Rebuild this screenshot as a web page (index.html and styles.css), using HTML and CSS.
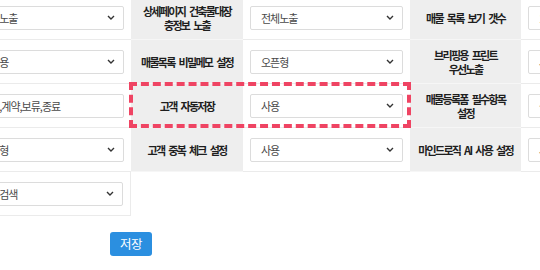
FILE: index.html
```html
<!DOCTYPE html>
<html lang="ko">
<head>
<meta charset="utf-8">
<link rel="stylesheet" href="styles.css">
</head>
<body>
<div class="page">
  <div class="grid">
    <div class="cell val"><div class="sel"><span>전체노출</span><svg class="chev" width="8" height="5" viewBox="0 0 8 5"><path d="M1 1l3 3 3-3" fill="none" stroke="#333" stroke-width="1.4"/></svg></div></div>
    <div class="cell lab">상세페이지 건축물대장<br>충정보 노출</div>
    <div class="cell val"><div class="sel"><span>전체노출</span><svg class="chev" width="8" height="5" viewBox="0 0 8 5"><path d="M1 1l3 3 3-3" fill="none" stroke="#333" stroke-width="1.4"/></svg></div></div>
    <div class="cell lab">매물 목록 보기 갯수</div>
    <div class="cell val"><div class="sel"><span>10개</span><svg class="chev" width="8" height="5" viewBox="0 0 8 5"><path d="M1 1l3 3 3-3" fill="none" stroke="#333" stroke-width="1.4"/></svg></div></div>

    <div class="cell val"><div class="sel"><span>미사용</span><svg class="chev" width="8" height="5" viewBox="0 0 8 5"><path d="M1 1l3 3 3-3" fill="none" stroke="#333" stroke-width="1.4"/></svg></div></div>
    <div class="cell lab">매물목록 비밀메모 설정</div>
    <div class="cell val"><div class="sel"><span>오픈형</span><svg class="chev" width="8" height="5" viewBox="0 0 8 5"><path d="M1 1l3 3 3-3" fill="none" stroke="#333" stroke-width="1.4"/></svg></div></div>
    <div class="cell lab">브리핑용 프린트<br>우선노출</div>
    <div class="cell val"><div class="sel"><span>사용</span><svg class="chev" width="8" height="5" viewBox="0 0 8 5"><path d="M1 1l3 3 3-3" fill="none" stroke="#333" stroke-width="1.4"/></svg></div></div>

    <div class="cell val"><div class="sel inp"><span>진행,계약,보류,종료</span></div></div>
    <div class="cell lab">고객 자동저장</div>
    <div class="cell val"><div class="sel"><span>사용</span><svg class="chev" width="8" height="5" viewBox="0 0 8 5"><path d="M1 1l3 3 3-3" fill="none" stroke="#333" stroke-width="1.4"/></svg></div></div>
    <div class="cell lab">매물등록폼 필수항목<br>설정</div>
    <div class="cell val"><div class="sel"><span>설정</span><svg class="chev" width="8" height="5" viewBox="0 0 8 5"><path d="M1 1l3 3 3-3" fill="none" stroke="#333" stroke-width="1.4"/></svg></div></div>

    <div class="cell val"><div class="sel"><span>오픈형</span><svg class="chev" width="8" height="5" viewBox="0 0 8 5"><path d="M1 1l3 3 3-3" fill="none" stroke="#333" stroke-width="1.4"/></svg></div></div>
    <div class="cell lab">고객 중복 체크 설정</div>
    <div class="cell val"><div class="sel"><span>사용</span><svg class="chev" width="8" height="5" viewBox="0 0 8 5"><path d="M1 1l3 3 3-3" fill="none" stroke="#333" stroke-width="1.4"/></svg></div></div>
    <div class="cell lab">마인드로직 AI 사용 설정</div>
    <div class="cell val"><div class="sel"><span>사용</span><svg class="chev" width="8" height="5" viewBox="0 0 8 5"><path d="M1 1l3 3 3-3" fill="none" stroke="#333" stroke-width="1.4"/></svg></div></div>

    <div class="cell val last"><div class="sel"><span>주소검색</span><svg class="chev" width="8" height="5" viewBox="0 0 8 5"><path d="M1 1l3 3 3-3" fill="none" stroke="#333" stroke-width="1.4"/></svg></div></div>

    <div class="highlight"></div>
  </div>
  <div class="actions"><button class="save">저장</button></div>
  <div class="footline"></div>
</div>
</body>
</html>
```

FILE: styles.css
```css
html, body {
  margin: 0;
  padding: 0;
  background: #fff;
  overflow: hidden;
}
body {
  width: 540px;
  height: 270px;
  font-family: "Noto Sans CJK KR", "Noto Sans", sans-serif;
  color: #222;
}
.page {
  margin-top: -4px;
}
.grid {
  position: relative;
  display: grid;
  grid-template-columns: 168px 112px 167px 111px 200px;
  margin-left: -37px;
  width: 758px;
}
.cell {
  box-sizing: border-box;
  height: 44px;
  border-bottom: 1px solid #ebebeb;
  display: flex;
  align-items: center;
}
.val {
  padding: 0 7px;
  background: #fff;
}
.val.last {
  border-right: 1px solid #ebebeb;
}
.lab {
  background: #eeeeee;
  justify-content: center;
  text-align: center;
  font-size: 11px;
  font-weight: 700;
  line-height: 14px;
  letter-spacing: -1.7px;
  word-spacing: 2.5px;
  color: #1e1e1e;
  border-bottom-color: #f6f6f6;
}
.sel {
  box-sizing: border-box;
  flex: 1;
  height: 24px;
  border: 1px solid #dcdcdc;
  border-radius: 2px;
  background: #fff;
  display: flex;
  align-items: center;
  justify-content: space-between;
  padding: 0 8px 0 10px;
  font-size: 11px;
  letter-spacing: -1px;
  color: #4a4a4a;
  white-space: nowrap;
  overflow: hidden;
}
.chev {
  flex: none;
}
.highlight {
  position: absolute;
  grid-column: 2 / 4;
  grid-row: 3 / 4;
  top: -2px;
  left: -2px;
  right: -1px;
  bottom: 0;
  border: 4px dashed #ef4463;
  pointer-events: none;
}
.actions {
  margin-top: 14px;
  padding-left: 110px;
}
.save {
  width: 42px;
  height: 24px;
  border: none;
  border-radius: 3px;
  background: #2b8fe0;
  color: #fff;
  font-family: "Noto Sans CJK KR", "Noto Sans", sans-serif;
  font-size: 12.5px;
  padding: 0;
  letter-spacing: -0.5px;
}
.footline {
  margin-top: 15px;
  border-top: 1px solid #eeeeee;
}
```
